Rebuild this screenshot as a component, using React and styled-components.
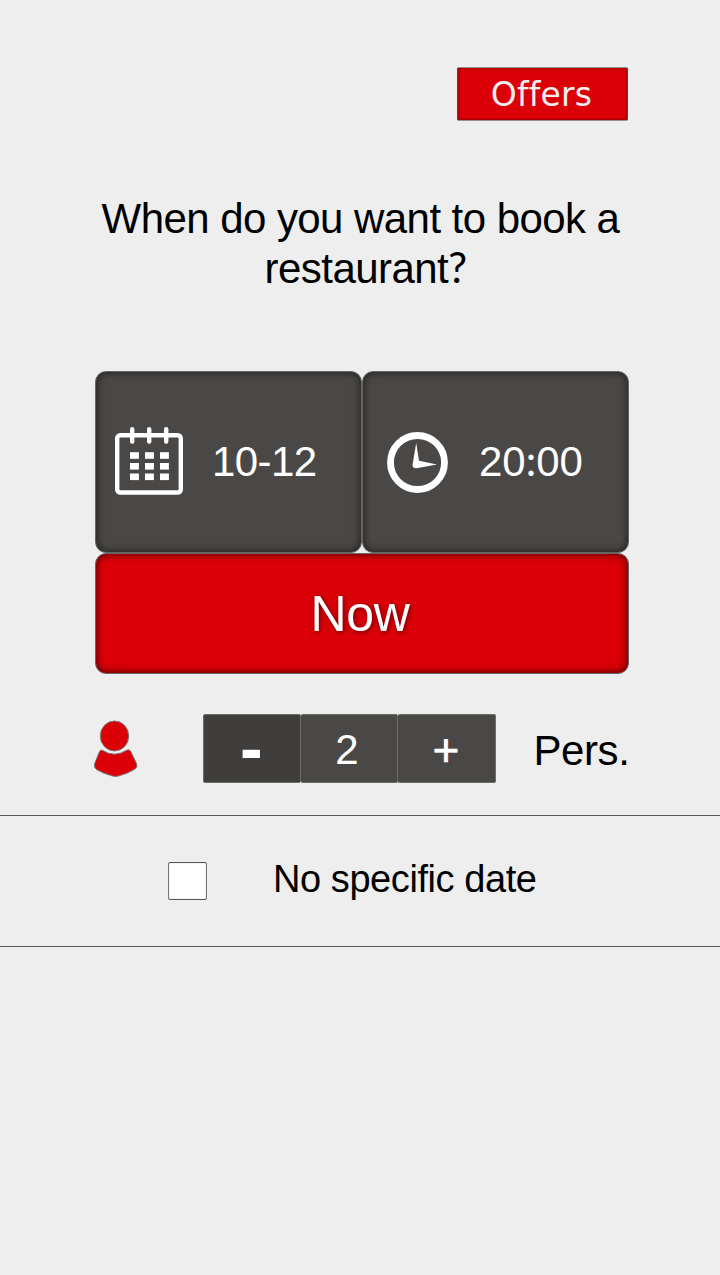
import React, { useState } from 'react';
import styled, { createGlobalStyle, css } from 'styled-components';

const GlobalStyle = createGlobalStyle`
  * { box-sizing: border-box; }
  body {
    margin: 0;
    background: #eeeeee;
    font-family: "Liberation Sans", Arial, sans-serif;
    color: #000;
  }
  button { font: inherit; margin: 0; padding: 0; cursor: pointer; }
`;

const Screen = styled.main`
  width: 720px;
  min-height: 1275px;
  overflow: hidden;
  background: #eeeeee;
`;

const TopBar = styled.header`
  display: flex;
  justify-content: flex-end;
  padding: 67px 92px 0 0;
`;

const OffersButton = styled.button`
  width: 171px;
  height: 54px;
  padding: 1px 2px 0 0;
  border: 1px solid #77393b;
  border-top-color: #9b8f8f;
  border-bottom-color: #9b8f8f;
  border-radius: 2px;
  background: #db0007;
  box-shadow: inset 0 0 3px rgba(40, 0, 0, 0.75);
  color: #f2eeee;
  && { font-family: "DejaVu Sans", Verdana, sans-serif; font-size: 33px; line-height: 50px; letter-spacing: 0.2px; }
`;

const Question = styled.h1`
  margin: 73px 0 0;
  padding: 0 90px 0 91px;
  font-size: 42px;
  font-weight: 400;
  line-height: 50px;
  letter-spacing: -0.56px;
  text-align: center;
`;

const QuestionEnd = styled.span`
  display: block;
  padding-left: 10px;
`;

const Mark = styled.span`
  font-family: Lato, sans-serif;
  line-height: 1;
`;

const Panel = styled.section`
  display: grid;
  grid-template-columns: 267px 267px;
  grid-template-rows: 182px 121px;
  width: 534px;
  margin: 76.5px 0 0 94.5px;
`;

const tile = css`
  border: 1px solid #656563;
  border-radius: 11px;
  color: #fff;
`;

const PickerButton = styled.button`
  ${tile}
  display: flex;
  align-items: center;
  gap: ${(p) => p.$gap}px;
  padding: ${(p) => p.$drop}px 0 0 ${(p) => p.$inset}px;
  background: #4a4846;
  box-shadow: inset 0 0 9px rgba(0, 0, 0, 0.65);
  && { font-size: 42px; letter-spacing: ${(p) => p.$tracking}px; }
`;

const NowButton = styled.button`
  ${tile}
  grid-column: 1 / -1;
  padding: 2px 3px 0 0;
  background: #db0007;
  box-shadow: inset 0 0 9px rgba(0, 0, 0, 0.72);
  text-shadow: 1px 1px 5px rgba(0, 0, 0, 0.55);
  && { font-size: 50px; letter-spacing: -0.3px; }
`;

const PartyRow = styled.section`
  display: flex;
  height: 69px;
  margin-top: 40px;
  padding-left: 93px;
  align-items: center;
`;

const Stepper = styled.div`
  display: grid;
  grid-template-columns: 98px 97px 98px;
  height: 69px;
  margin-left: 65.4px;
`;

const StepCell = styled.button`
  display: flex;
  align-items: center;
  justify-content: center;
  border: 1px solid #6d6d6a;
  border-left-width: ${(p) => (p.$joined ? 0 : 1)}px;
  border-radius: 2px;
  padding: 3px ${(p) => p.$shift || 0}px 0 0;
  background: ${(p) => (p.$dim ? '#403e3c' : '#4a4846')};
  color: #fff;
  && {
    font-size: ${(p) => p.$size || 42}px;
    font-weight: ${(p) => (p.$bold ? 700 : 400)};
    line-height: 60px;
    -webkit-text-stroke: ${(p) => p.$stroke || 0}px #fff;
  }
`;

const StepSign = styled.span`
  margin-top: ${(p) => p.$rise}px;
`;

const Persons = styled.span`
  margin: 6px 0 0 37px;
  font-size: 42px;
  letter-spacing: -0.4px;
`;

const FlexibleRow = styled.label`
  display: flex;
  align-items: center;
  height: 132px;
  margin-top: 32px;
  padding-left: 168px;
  border-top: 1px solid #595959;
  border-bottom: 1px solid #595959;
`;

const CheckBox = styled.input`
  appearance: none;
  flex: none;
  width: 39px;
  height: 38px;
  margin: 0;
  border: 1px solid #555;
  border-left-color: #777;
  border-right-color: #777;
  border-radius: 2px;
  background: #fff;
  box-shadow: inset 0 0 1px #777;
`;

const FlexibleText = styled.span`
  margin: -2px 0 0 66px;
  font-size: 38px;
  letter-spacing: -0.43px;
`;

function CalendarIcon() {
  return (
    <svg width="69" height="69" viewBox="0 0 69 69" fill="#fff">
      <rect x="2.2" y="8.2" width="63.6" height="57.3" rx="3" fill="none" stroke="#fff" strokeWidth="4.4" />
      {[17.2, 34.2, 51.2].map((x) => (
        <path key={x} d={`M${x} 2.2v12.3`} stroke="#fff" strokeWidth="4.4" strokeLinecap="round" />
      ))}
      {[25.2, 36, 46.5].map((y) =>
        [15, 30, 45].map((x) => <rect key={`${x}-${y}`} x={x} y={y} width="8.9" height="6.6" />)
      )}
    </svg>
  );
}

function ClockIcon() {
  return (
    <svg width="61" height="61" viewBox="0 0 61 61">
      <circle cx="30.5" cy="30.5" r="27" fill="none" stroke="#fff" strokeWidth="6.8" />
      <path d="M29.2 11 32 28.8 50 32.6 29.5 36.3Q25.2 36.4 25.6 32.5Z" fill="#fff" />
    </svg>
  );
}

const Figure = styled.svg`
  flex: none;
  margin-top: 2px;
`;

function PersonIcon() {
  return (
    <Figure width="45" height="58" viewBox="0 0 45 58" fill="#db0007" stroke="#777" strokeWidth="1">
      <ellipse cx="21.5" cy="16" rx="14.2" ry="15" />
      <path d="M9.5 30.3Q21.5 38 33.5 30.3Q36 29 37.5 31L43.5 43.5Q45 47 42 49Q34 54 25.5 56Q22.5 56.8 19.5 56Q11 54 3.5 49.5Q1 48 1.5 44L6.5 31.5Q7.5 29.3 9.5 30.3Z" />
    </Figure>
  );
}

export default function App() {
  const [guests, setGuests] = useState(2);

  return (
    <>
      <GlobalStyle />
      <Screen>
        <TopBar>
          <OffersButton>Offers</OffersButton>
        </TopBar>
        <Question>
          When do you want to book a
          <QuestionEnd>
            restaurant<Mark>?</Mark>
          </QuestionEnd>
        </Question>
        <Panel>
          <PickerButton $inset={19} $gap={28.5} $drop={0} $tracking={-0.6}>
            <CalendarIcon />
            <span>10-12</span>
          </PickerButton>
          <PickerButton $inset={24} $gap={31.5} $drop={1} $tracking={0}>
            <ClockIcon />
            <span>
              20<Mark>:</Mark>00
            </span>
          </PickerButton>
          <NowButton>Now</NowButton>
        </Panel>
        <PartyRow>
          <PersonIcon />
          <Stepper>
            <StepCell $dim $bold $size={68} $shift={2} onClick={() => setGuests(Math.max(1, guests - 1))}>
              <StepSign $rise={-4}>-</StepSign>
            </StepCell>
            <StepCell as="output" $joined $shift={5}>{guests}</StepCell>
            <StepCell $joined $size={46} $stroke={0.6} $shift={2} onClick={() => setGuests(guests + 1)}>
              <StepSign $rise={1}>+</StepSign>
            </StepCell>
          </Stepper>
          <Persons>Pers.</Persons>
        </PartyRow>
        <FlexibleRow>
          <CheckBox type="checkbox" />
          <FlexibleText>No specific date</FlexibleText>
        </FlexibleRow>
      </Screen>
    </>
  );
}
